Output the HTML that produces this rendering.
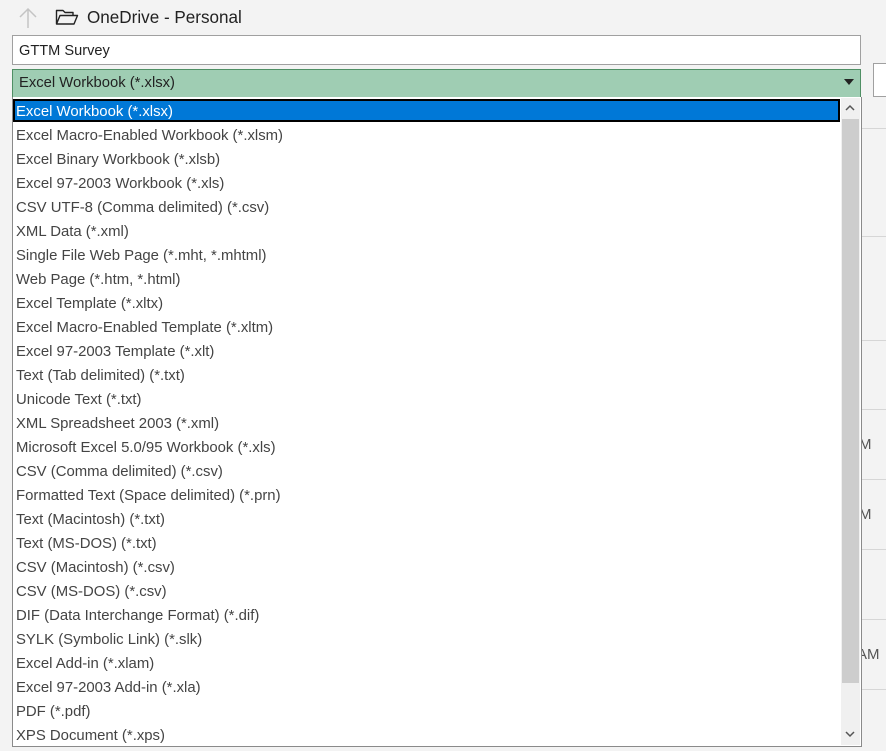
<!DOCTYPE html>
<html><head><style>
body{margin:0;width:886px;height:751px;background:#f3f3f3;position:relative;overflow:hidden;font-family:"Liberation Sans",sans-serif;}
.abs{position:absolute}
.hl{position:absolute;left:862px;width:24px;height:1px;background:#d6d6d6}
.item{position:absolute;left:16px;font-size:14.9px;color:#444;white-space:nowrap;line-height:24px;top:0}
</style></head><body>
<svg class="abs" style="left:16px;top:6px" width="24" height="24" viewBox="0 0 24 24"><path d="M12 3V22M4 11L12 3L20 11" stroke="#c4c4c4" stroke-width="1.5" fill="none"/></svg>
<svg class="abs" style="left:55px;top:8px" width="24" height="18" viewBox="0 0 24 18"><path d="M1.5 16V2.5H8L10 4.5H18V7.5M1.5 16L5 7.5H22.5L19 16Z" stroke="#222" stroke-width="1.4" fill="none" stroke-linejoin="round"/></svg>
<div class="abs" style="left:87px;top:8px;font-size:17.1px;color:#222">OneDrive - Personal</div>
<div class="abs" style="left:12px;top:35px;width:847px;height:28px;background:#fff;border:1px solid #a0a0a0"></div>
<div class="abs" style="left:19px;top:43px;font-size:14.6px;color:#222">GTTM Survey</div>
<div class="abs" style="left:873px;top:63px;width:20px;height:32px;background:#fff;border:1px solid #a0a0a0"></div>
<div class="abs" style="left:12px;top:69px;width:847px;height:27px;background:#9fcdb3;border:1px solid #4f8f64"></div>
<div class="abs" style="left:19px;top:75px;font-size:14.8px;color:#222">Excel Workbook (*.xlsx)</div>
<svg class="abs" style="left:844px;top:79px" width="10" height="6"><path d="M0 0H10L5 6Z" fill="#222"/></svg>
<div class="hl" style="top:128px"></div><div class="hl" style="top:236px"></div><div class="hl" style="top:340px"></div><div class="hl" style="top:409px"></div><div class="hl" style="top:479px"></div><div class="hl" style="top:549px"></div><div class="hl" style="top:619px"></div><div class="hl" style="top:689px"></div>
<div class="abs" style="left:859px;top:436px;font-size:15px;color:#555">M</div>
<div class="abs" style="left:859px;top:506px;font-size:15px;color:#555">M</div>
<div class="abs" style="left:857px;top:646px;font-size:15px;color:#555">AM</div>
<div class="abs" style="left:12px;top:97px;width:848px;height:649px;background:#fff;border:1px solid #8a8a8a;border-top:none"></div>
<div class="abs" style="left:841px;top:98px;width:19px;height:647px;background:#f0f0f0"></div>
<div class="abs" style="left:842px;top:119px;width:17px;height:564px;background:#cdcdcd"></div>
<svg class="abs" style="left:845px;top:104px" width="10" height="7"><path d="M1 6L5 2L9 6" stroke="#555" stroke-width="1.5" fill="none"/></svg>
<svg class="abs" style="left:845px;top:731px" width="10" height="7"><path d="M1 1L5 5L9 1" stroke="#555" stroke-width="1.5" fill="none"/></svg>
<div class="abs" style="left:13px;top:99px;width:823px;height:19px;background:#0078d7;border:2px solid #000"></div>
<div class="abs" style="left:0;top:100px;width:886px">
<div class="item" style="top:0;color:#fff">Excel Workbook (*.xlsx)</div>
<div class="item" style="top:24px">Excel Macro-Enabled Workbook (*.xlsm)</div>
<div class="item" style="top:48px">Excel Binary Workbook (*.xlsb)</div>
<div class="item" style="top:72px">Excel 97-2003 Workbook (*.xls)</div>
<div class="item" style="top:96px">CSV UTF-8 (Comma delimited) (*.csv)</div>
<div class="item" style="top:120px">XML Data (*.xml)</div>
<div class="item" style="top:144px">Single File Web Page (*.mht, *.mhtml)</div>
<div class="item" style="top:168px">Web Page (*.htm, *.html)</div>
<div class="item" style="top:192px">Excel Template (*.xltx)</div>
<div class="item" style="top:216px">Excel Macro-Enabled Template (*.xltm)</div>
<div class="item" style="top:240px">Excel 97-2003 Template (*.xlt)</div>
<div class="item" style="top:264px">Text (Tab delimited) (*.txt)</div>
<div class="item" style="top:288px">Unicode Text (*.txt)</div>
<div class="item" style="top:312px">XML Spreadsheet 2003 (*.xml)</div>
<div class="item" style="top:336px">Microsoft Excel 5.0/95 Workbook (*.xls)</div>
<div class="item" style="top:360px">CSV (Comma delimited) (*.csv)</div>
<div class="item" style="top:384px">Formatted Text (Space delimited) (*.prn)</div>
<div class="item" style="top:408px">Text (Macintosh) (*.txt)</div>
<div class="item" style="top:432px">Text (MS-DOS) (*.txt)</div>
<div class="item" style="top:456px">CSV (Macintosh) (*.csv)</div>
<div class="item" style="top:480px">CSV (MS-DOS) (*.csv)</div>
<div class="item" style="top:504px">DIF (Data Interchange Format) (*.dif)</div>
<div class="item" style="top:528px">SYLK (Symbolic Link) (*.slk)</div>
<div class="item" style="top:552px">Excel Add-in (*.xlam)</div>
<div class="item" style="top:576px">Excel 97-2003 Add-in (*.xla)</div>
<div class="item" style="top:600px">PDF (*.pdf)</div>
<div class="item" style="top:624px">XPS Document (*.xps)</div>
</div>
</body></html>
